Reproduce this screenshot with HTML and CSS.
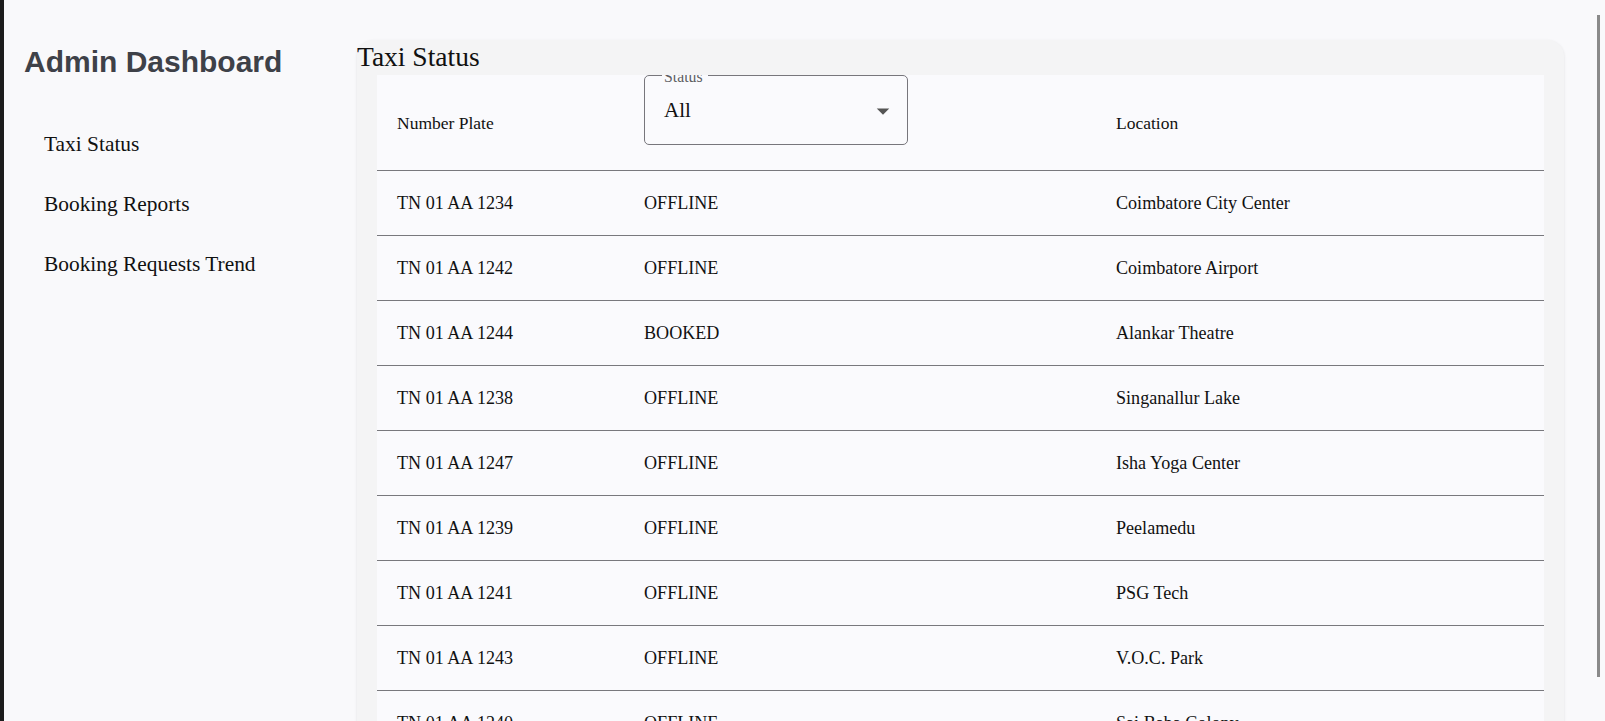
FILE: index.html
```html
<!DOCTYPE html>
<html lang="en">
<head>
<meta charset="utf-8">
<title>Admin Dashboard</title>
<link rel="stylesheet" href="styles.css">
</head>
<body>
<div class="app">
  <aside class="sidebar">
    <h2 class="brand">Admin Dashboard</h2>
    <nav class="nav">
      <a class="nav-item">Taxi Status</a>
      <a class="nav-item">Booking Reports</a>
      <a class="nav-item">Booking Requests Trend</a>
    </nav>
  </aside>
  <main class="main">
    <section class="card">
      <h3 class="card-title">Taxi Status</h3>
      <div class="table-wrap">
        <div class="row head">
          <div class="cell head-cell">Number Plate</div>
          <div class="cell select-cell">
            <div class="select">
              <span class="select-label">Status</span>
              <span class="select-value">All</span>
              <svg class="select-arrow" viewBox="0 0 24 24" width="30" height="30"><path d="M7 10l5 5 5-5z"/></svg>
            </div>
          </div>
          <div class="cell head-cell">Location</div>
        </div>
        <div class="row"><div class="cell">TN 01 AA 1234</div><div class="cell">OFFLINE</div><div class="cell">Coimbatore City Center</div></div>
        <div class="row"><div class="cell">TN 01 AA 1242</div><div class="cell">OFFLINE</div><div class="cell">Coimbatore Airport</div></div>
        <div class="row"><div class="cell">TN 01 AA 1244</div><div class="cell">BOOKED</div><div class="cell">Alankar Theatre</div></div>
        <div class="row"><div class="cell">TN 01 AA 1238</div><div class="cell">OFFLINE</div><div class="cell">Singanallur Lake</div></div>
        <div class="row"><div class="cell">TN 01 AA 1247</div><div class="cell">OFFLINE</div><div class="cell">Isha Yoga Center</div></div>
        <div class="row"><div class="cell">TN 01 AA 1239</div><div class="cell">OFFLINE</div><div class="cell">Peelamedu</div></div>
        <div class="row"><div class="cell">TN 01 AA 1241</div><div class="cell">OFFLINE</div><div class="cell">PSG Tech</div></div>
        <div class="row"><div class="cell">TN 01 AA 1243</div><div class="cell">OFFLINE</div><div class="cell">V.O.C. Park</div></div>
        <div class="row"><div class="cell">TN 01 AA 1240</div><div class="cell">OFFLINE</div><div class="cell">Sai Baba Colony</div></div>
      </div>
    </section>
  </main>
  <div class="scroll-thumb"></div>
</div>
</body>
</html>
```

FILE: styles.css
```css
html, body {
  margin: 0;
  padding: 0;
  height: 721px;
  overflow: hidden;
  background: #f9f9fb;
}

.app {
  position: relative;
  display: flex;
  min-height: 721px;
  border-left: 4px solid #1c1c1c;
  background: #f9f9fb;
  font-family: "Liberation Serif", "Times New Roman", serif;
  color: #111;
}

.sidebar {
  width: 353px;
  flex: 0 0 353px;
  box-sizing: border-box;
  padding: 45px 20px 0 20px;
}

.brand {
  margin: 0 0 35px 0;
  font-family: "Liberation Sans", Arial, sans-serif;
  font-weight: bold;
  font-size: 30px;
  line-height: 34px;
  color: #3e4148;
  white-space: nowrap;
}

.nav {
  display: flex;
  flex-direction: column;
}

.nav-item {
  display: block;
  padding-left: 20px;
  height: 60px;
  line-height: 60px;
  font-size: 21.4px;
  color: #111;
  cursor: pointer;
}

.main {
  flex: 1;
  padding: 40px 41px 0 0;
  box-sizing: border-box;
}

.card {
  background: #f4f4f5;
  border-radius: 16px;
  box-shadow: 0 1px 3px rgba(0, 0, 0, 0.1);
  padding-bottom: 20px;
}

.card-title {
  margin: 0;
  padding-top: 1px;
  height: 33.5px;
  line-height: 32.5px;
  font-size: 27.5px;
  font-weight: normal;
  color: #111;
}

.table-wrap {
  margin: 0 20px;
  background: #fafafd;
  overflow: hidden;
}

.row {
  display: grid;
  grid-template-columns: 247px 472px 1fr;
  align-items: center;
  height: 64px;
  border-bottom: 1px solid #78787d;
}

.row.head {
  height: 95px;
}

.cell {
  padding-left: 20px;
  font-size: 18.1px;
  line-height: 24px;
  white-space: nowrap;
}

.head-cell {
  font-size: 17.5px;
  padding-top: 2px;
}

.select-cell {
  align-self: start;
}

.select {
  position: relative;
  box-sizing: border-box;
  width: 264px;
  height: 70px;
  border: 1px solid #77767c;
  border-radius: 5px;
  display: flex;
  align-items: center;
  padding-left: 19px;
}

.select-label {
  position: absolute;
  left: 17px;
  top: -8px;
  padding: 0 5px 0 2px;
  background: #fafafd;
  font-size: 15.75px;
  line-height: 18px;
  color: #5d5d62;
}

.select-value {
  font-size: 21px;
  line-height: 24px;
  color: #111;
  padding-top: 1px;
}

.select-arrow {
  position: absolute;
  right: 9px;
  top: 20px;
  fill: #555;
}

.scroll-thumb {
  position: absolute;
  right: 5px;
  top: 15px;
  width: 3px;
  height: 662px;
  background: #8a8a8a;
}
```
